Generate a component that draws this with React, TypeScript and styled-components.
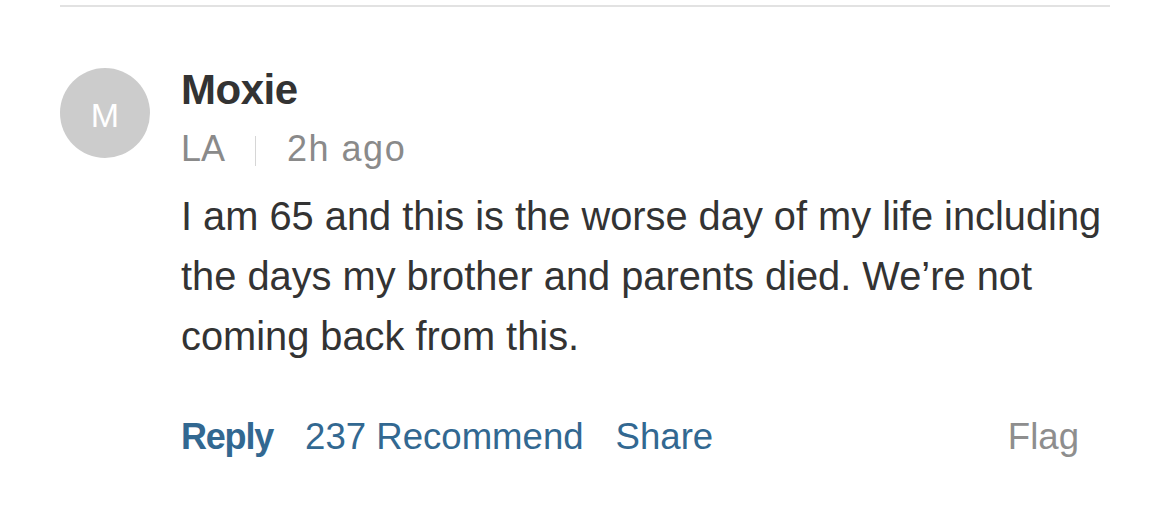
import styled, { createGlobalStyle } from "styled-components";

const GlobalStyle = createGlobalStyle`
  html, body {
    margin: 0;
    padding: 0;
    background: #ffffff;
  }
  body {
    font-family: "Liberation Sans", Arial, sans-serif;
  }
`;

const Thread = styled.section`
  width: 1050px;
  margin: 5px 0 0 60px;
  border-top: 2px solid #e2e2e2;
  padding-top: 61px;
`;

const Comment = styled.article`
  display: flex;
  gap: 31px;
`;

const Avatar = styled.div`
  flex: 0 0 90px;
  width: 90px;
  height: 90px;
  border-radius: 50%;
  background: #cccccc;
  color: #ffffff;
  display: flex;
  align-items: center;
  justify-content: center;
  font-size: 34px;
  padding-top: 4px;
  box-sizing: border-box;
`;

const Body = styled.div`
  flex: 1;
  display: flex;
  flex-direction: column;
`;

const Name = styled.div`
  font-size: 42px;
  font-weight: 700;
  color: #333333;
  letter-spacing: -0.5px;
  line-height: 44px;
`;

const Meta = styled.div`
  display: flex;
  align-items: center;
  font-size: 36px;
  color: #8a8a8a;
  line-height: 44px;
  margin-top: 15px;
`;

const Place = styled.span``;

const Time = styled.span`
  letter-spacing: 1.5px;
`;

const Divider = styled.span`
  width: 1px;
  height: 30px;
  background: #d6d6d6;
  margin: 4px 31px 0 30px;
`;

const Text = styled.p`
  margin: 15px 0 0;
  font-size: 39.8px;
  line-height: 60px;
  color: #333333;
  width: 935px;
`;

const Actions = styled.div`
  display: flex;
  align-items: baseline;
  gap: 32px;
  margin-top: 50px;
  padding-right: 37px;
`;

const Action = styled.a<{ $bold?: boolean; $muted?: boolean; $push?: boolean }>`
  font-size: ${(p) => (p.$bold ? "36px" : "36.6px")};
  font-weight: ${(p) => (p.$bold ? 700 : 400)};
  letter-spacing: ${(p) => (p.$bold ? "-1.2px" : "0")};
  color: ${(p) => (p.$muted ? "#8e8e8e" : "#326891")};
  margin-left: ${(p) => (p.$push ? "auto" : "0")};
  text-decoration: none;
  cursor: pointer;
`;

export default function App() {
  return (
    <>
      <GlobalStyle />
      <Thread>
        <Comment>
          <Avatar>M</Avatar>
          <Body>
            <Name>Moxie</Name>
            <Meta>
              <Place>LA</Place>
              <Divider />
              <Time>2h ago</Time>
            </Meta>
            <Text>
              I am 65 and this is the worse day of my life including the days my brother and parents
              died. We’re not coming back from this.
            </Text>
            <Actions>
              <Action $bold>Reply</Action>
              <Action>237 Recommend</Action>
              <Action>Share</Action>
              <Action $muted $push>
                Flag
              </Action>
            </Actions>
          </Body>
        </Comment>
      </Thread>
    </>
  );
}
